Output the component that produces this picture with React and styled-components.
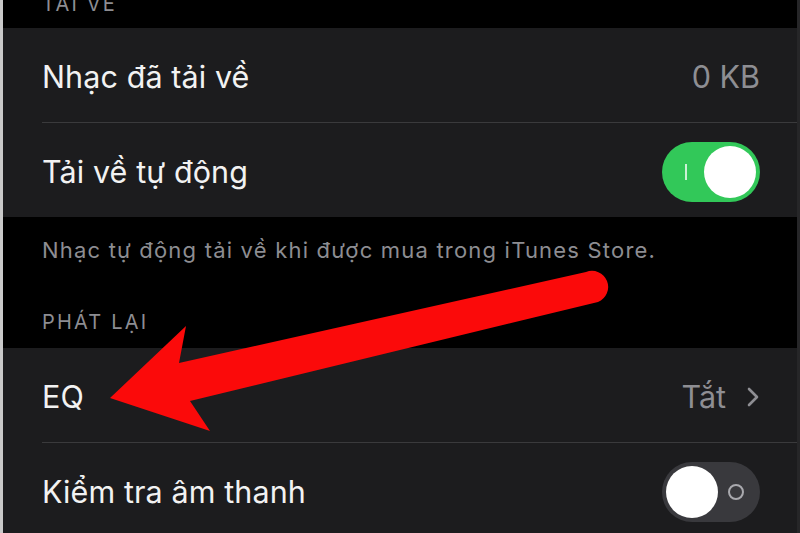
import styled, { createGlobalStyle } from "styled-components";

const GlobalStyle = createGlobalStyle`
  * {
    box-sizing: border-box;
  }

  body {
    margin: 0;
    background: #000;
    font-family: Inter, "Open Sans", "Liberation Sans", sans-serif;
  }
`;

const Screen = styled.div`
  position: relative;
  display: flex;
  flex-direction: column;
  width: 800px;
  height: 533px;
  overflow: hidden;
  background: #000;
  border-left: 3px solid #c9c9c9;
  border-right: 3px solid #262628;

  & > * {
    flex-shrink: 0;
  }
`;

const SectionHeader = styled.div`
  height: ${(p) => p.height}px;
  margin-top: ${(p) => p.shift || 0}px;
  padding: ${(p) => p.top || 0}px 0 0 39px;
  color: #8d8d92;
  font-size: 20px;
  letter-spacing: 2.2px;
  line-height: 22px;
`;

const Footnote = styled.div`
  padding: 21px 0 0 39px;
  color: #8d8d92;
  font-size: 22px;
  letter-spacing: 1.2px;
  line-height: 24px;
`;

const Group = styled.div`
  background: #1c1c1e;
`;

const Row = styled.div`
  height: 94px;
  display: flex;
  align-items: center;
  justify-content: space-between;
  padding: 3px 37px 0 39px;
`;

const Label = styled.span`
  color: #f2f2f2;
  font-size: 30.5px;
  letter-spacing: 0.1px;
`;

const Detail = styled.span`
  display: flex;
  align-items: center;
  gap: 20px;
  color: #8e8e93;
  font-size: 30.5px;
`;

const Separator = styled.div`
  height: 1px;
  margin-left: 39px;
  background: #3a3a3c;
`;

const Track = styled.div`
  position: relative;
  width: 98px;
  height: 60px;
  border-radius: 30px;
  background: ${(p) => (p.on ? "#32c859" : "#39393d")};
  flex-shrink: 0;
`;

const Knob = styled.div`
  position: absolute;
  top: 4px;
  left: ${(p) => (p.on ? "42px" : "4px")};
  width: 52px;
  height: 52px;
  border-radius: 50%;
  background: #fff;
`;

const OnMark = styled.div`
  position: absolute;
  left: 23px;
  top: 22px;
  width: 2px;
  height: 16px;
  background: rgba(255, 255, 255, 0.75);
`;

const OffMark = styled.div`
  position: absolute;
  right: 16px;
  top: 22px;
  width: 16px;
  height: 16px;
  border-radius: 50%;
  border: 2px solid #a9a9ae;
`;

const Overlay = styled.svg`
  position: absolute;
  left: -3px;
  top: 0;
  pointer-events: none;
`;

function Toggle({ on }) {
  return (
    <Track on={on ? 1 : 0}>
      {on ? <OnMark /> : <OffMark />}
      <Knob on={on ? 1 : 0} />
    </Track>
  );
}

function Chevron() {
  return (
    <svg width="14" height="22" viewBox="0 0 14 22">
      <path
        d="M3 3l8 8-8 8"
        fill="none"
        stroke="#8e8e93"
        strokeWidth="2.6"
        strokeLinecap="round"
        strokeLinejoin="round"
      />
    </svg>
  );
}

function Arrow() {
  return (
    <Overlay width="800" height="533" viewBox="0 0 800 533">
      <path
        d="M110 398 L186 326 L179 363 L586 272 A15 15 0 0 1 598 302 L190 401 L210 431 Z"
        fill="#fb0a0a"
      />
    </Overlay>
  );
}

export default function App() {
  return (
    <>
      <GlobalStyle />
      <Screen>
        <SectionHeader height={35} shift={-7}>
          TẢI VỀ
        </SectionHeader>
        <Group>
          <Row>
            <Label>Nhạc đã tải về</Label>
            <Detail>0 KB</Detail>
          </Row>
          <Separator />
          <Row>
            <Label>Tải về tự động</Label>
            <Toggle on />
          </Row>
        </Group>
        <Footnote>Nhạc tự động tải về khi được mua trong iTunes Store.</Footnote>
        <SectionHeader height={86} top={49}>
          PHÁT LẠI
        </SectionHeader>
        <Group>
          <Row>
            <Label>EQ</Label>
            <Detail>
              Tắt
              <Chevron />
            </Detail>
          </Row>
          <Separator />
          <Row>
            <Label>Kiểm tra âm thanh</Label>
            <Toggle />
          </Row>
        </Group>
        <Arrow />
      </Screen>
    </>
  );
}
